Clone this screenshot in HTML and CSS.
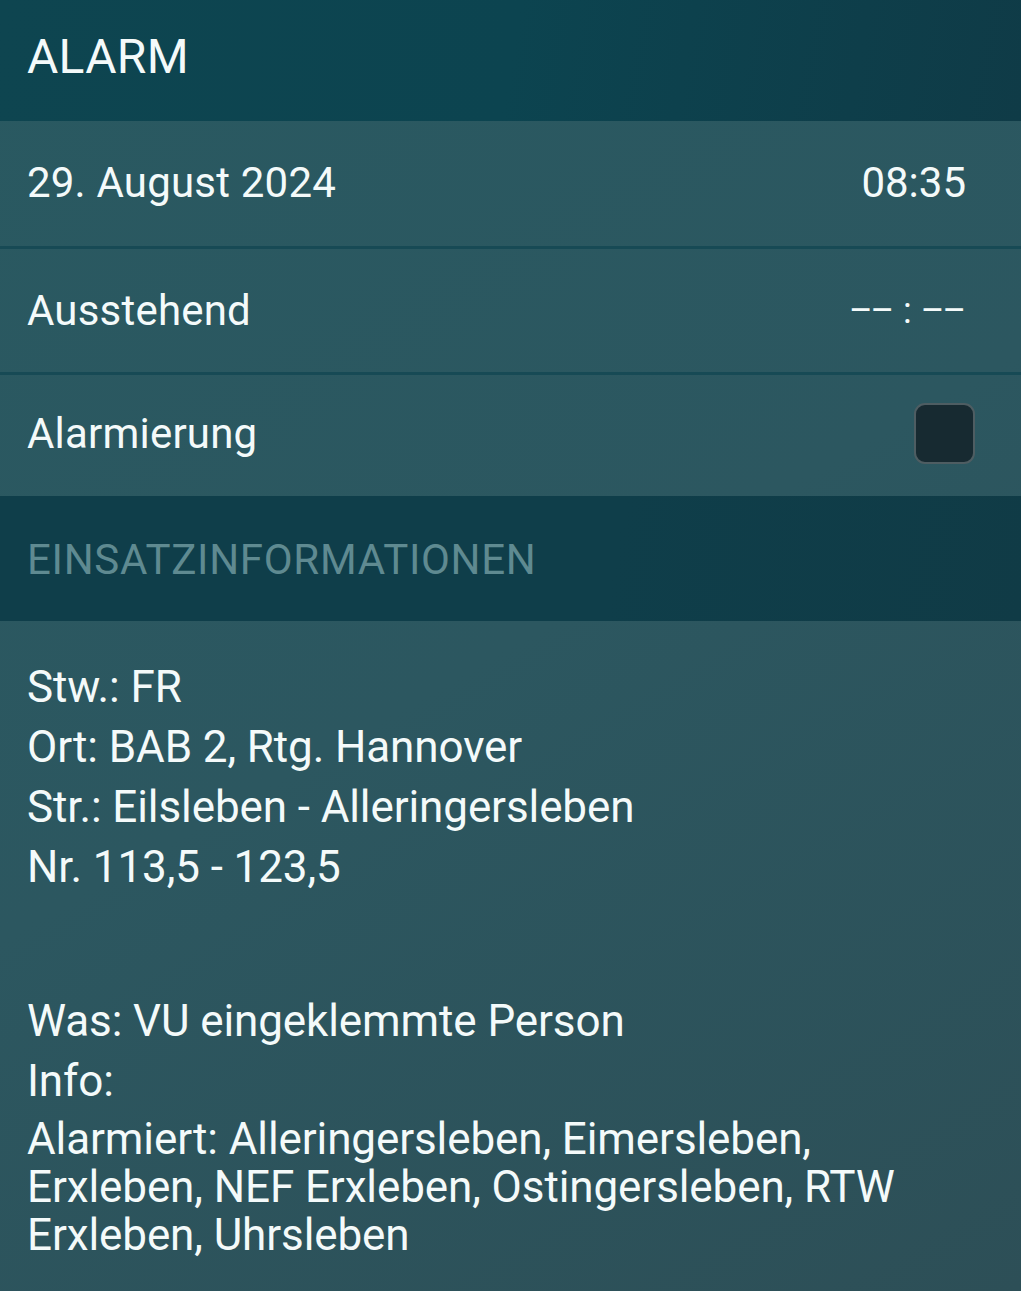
FILE: index.html
```html
<!DOCTYPE html>
<html lang="de">
<head>
<meta charset="utf-8">
<title>Alarm</title>
<link rel="stylesheet" href="styles.css">
</head>
<body>
<div class="screen">
  <header class="head">ALARM</header>
  <div class="row row-first">
    <span class="label">29. August 2024</span>
    <span class="value">08:35</span>
  </div>
  <div class="row">
    <span class="label">Ausstehend</span>
    <span class="value dashes">–– : ––</span>
  </div>
  <div class="row row-last">
    <span class="label">Alarmierung</span>
    <span class="checkbox"></span>
  </div>
  <div class="section">EINSATZINFORMATIONEN</div>
  <div class="info">
    <div class="block">
      <p class="line">Stw.: FR</p>
      <p class="line">Ort: BAB 2, Rtg. Hannover</p>
      <p class="line">Str.: Eilsleben - Alleringersleben</p>
      <p class="line">Nr. 113,5 - 123,5</p>
    </div>
    <div class="block block-2">
      <p class="line">Was: VU eingeklemmte Person</p>
      <p class="line">Info:</p>
      <p class="line wrap">Alarmiert: Alleringersleben, Eimersleben, Erxleben, NEF Erxleben, Ostingersleben, RTW Erxleben, Uhrsleben</p>
    </div>
  </div>
</div>
</body>
</html>
```

FILE: styles.css
```css
* { box-sizing: border-box; }
html, body { margin: 0; padding: 0; }
body {
  width: 1021px;
  height: 1291px;
  overflow: hidden;
  background: #2c5359;
  font-family: Roboto, "Noto Sans", sans-serif;
  color: #f4fafa;
}
.screen {
  display: flex;
  flex-direction: column;
  min-height: 1291px;
  background: linear-gradient(150deg, #295961 0%, #2c5760 50%, #2d4f57 100%);
}
.head {
  height: 121px;
  background: linear-gradient(100deg, #0e4550 0%, #0c4450 50%, #0f3b47 100%);
  font-size: 48px;
  padding: 27px 0 0 27px;
  line-height: 60px;
  letter-spacing: 0.3px;
}
.row {
  height: 126px;
  display: flex;
  align-items: center;
  justify-content: space-between;
  padding: 0 55px 0 27px;
  border-top: 3px solid #174a55;
  font-size: 42px;
}
.row-first { height: 125px; border-top: 0; padding-bottom: 3px; }
.row-last { height: 124px; padding-right: 46px; padding-bottom: 4px; }
.row .label { letter-spacing: 0.2px; }
.dashes { font-size: 36px; letter-spacing: -2px; word-spacing: 4px; margin-right: 2px; }
.checkbox {
  width: 61px;
  height: 61px;
  border-radius: 11px;
  background: #172a31;
  border: 2.5px solid #4e5d62;
}
.section {
  height: 125px;
  background: linear-gradient(100deg, #0f3e4a 0%, #0f3e4a 60%, #103b46 100%);
  color: #5f8a91;
  font-size: 42px;
  letter-spacing: 0.7px;
  display: flex;
  align-items: center;
  padding: 2px 0 0 27px;
}
.info {
  padding: 36px 27px 0 27px;
  font-size: 44px;
  letter-spacing: -0.1px;
}
.line { margin: 0; line-height: 60px; }
.block-2 { margin-top: 94px; }
.wrap { line-height: 48px; width: 920px; margin-top: 4px; }
```
